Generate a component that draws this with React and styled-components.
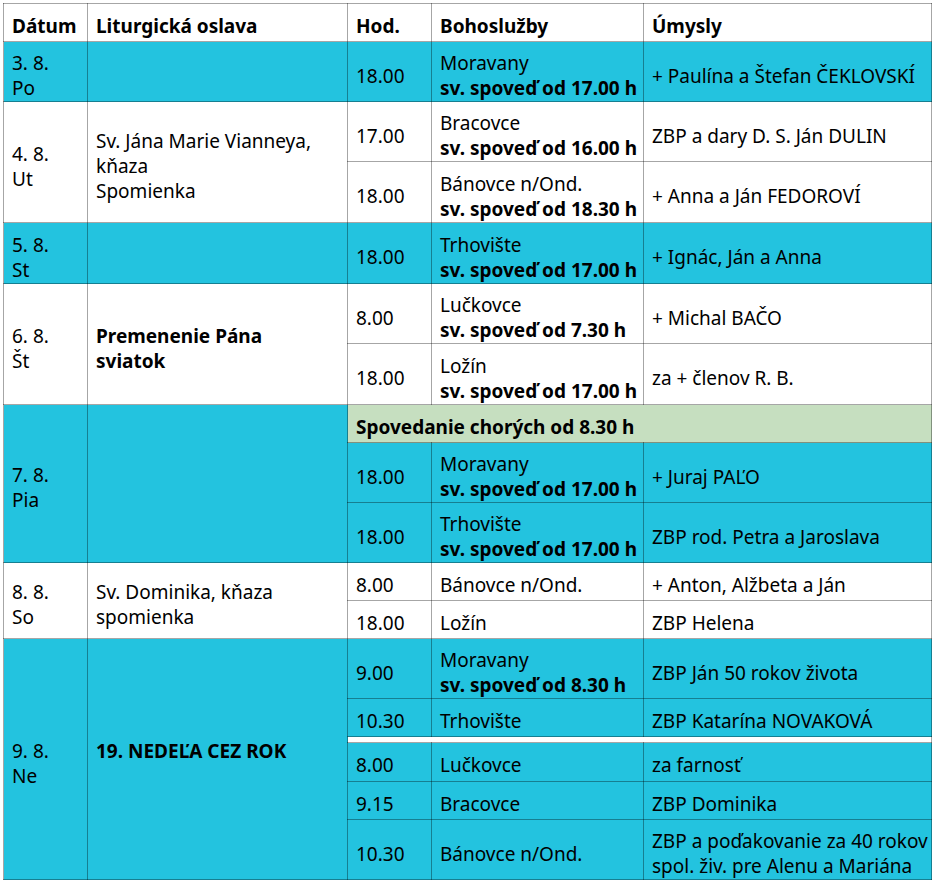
import React from 'react';
import styled, { createGlobalStyle, css } from 'styled-components';

const GlobalStyle = createGlobalStyle`
  html, body { margin: 0; padding: 0; background: #ffffff; }
  body { font-family: "Noto Sans", "Open Sans", sans-serif; color: #000; }
`;

const Page = styled.div`
  padding: 3px 0 0 3px;
`;

const Table = styled.table`
  border-collapse: collapse;
  table-layout: fixed;
  width: 929px;
  font-family: "Noto Sans", "Open Sans", sans-serif;
  font-size: 19px;
  line-height: 25px;
`;

const Row = styled.tr`
  height: ${p => p.$h}px;
  background: ${p => (p.$tone === 'cyan' ? '#23c3df' : '#ffffff')};
  ${p =>
    p.$h < 50 &&
    p.$h > 20 &&
    css`
      & > td:not([rowspan]),
      & > th {
        padding-top: 7px;
      }
    `}
`;

const Cell = styled.td`
  border: 1px solid rgba(0, 0, 0, 0.35);
  padding: 9px 4px 0 8px;
  vertical-align: middle;
  font-weight: ${p => (p.$bold ? 700 : 400)};
  white-space: ${p => (p.$nowrap ? 'nowrap' : 'normal')};
  background: ${p => (p.$bg ? p.$bg : 'transparent')};
`;

const Head = styled.th`
  border: 1px solid rgba(0, 0, 0, 0.35);
  padding: 7px 4px 0 8px;
  text-align: left;
  vertical-align: middle;
  font-weight: 700;
  background: #ffffff;
`;

const GapCell = styled.td`
  && {
    border: 1px solid rgba(0, 0, 0, 0.35);
    padding: 0;
    background: #ffffff;
    height: 4px;
    line-height: 0;
    font-size: 0;
  }
`;

const Strong = styled.b`
  font-weight: 700;
`;

function Service({ place, confession }) {
  return (
    <Cell $nowrap>
      {place}
      {confession && (
        <>
          <br />
          <Strong>{confession}</Strong>
        </>
      )}
    </Cell>
  );
}

function Lines({ items }) {
  return items.map((t, i) => (
    <React.Fragment key={i}>
      {i > 0 && <br />}
      {t}
    </React.Fragment>
  ));
}

export default function App() {
  return (
    <Page>
      <GlobalStyle />
      <Table>
        <colgroup>
          <col style={{ width: 84 }} />
          <col style={{ width: 260 }} />
          <col style={{ width: 84 }} />
          <col style={{ width: 212 }} />
          <col style={{ width: 288 }} />
        </colgroup>
        <thead>
          <Row $h={38}>
            <Head>Dátum</Head>
            <Head>Liturgická oslava</Head>
            <Head>Hod.</Head>
            <Head>Bohoslužby</Head>
            <Head>Úmysly</Head>
          </Row>
        </thead>
        <tbody>
          <Row $h={60} $tone="cyan">
            <Cell><Lines items={['3. 8.', 'Po']} /></Cell>
            <Cell />
            <Cell>18.00</Cell>
            <Service place="Moravany" confession="sv. spoveď od 17.00 h" />
            <Cell>+ Paulína a Štefan ČEKLOVSKÍ</Cell>
          </Row>

          <Row $h={60}>
            <Cell rowSpan={2}><Lines items={['4. 8.', 'Ut']} /></Cell>
            <Cell rowSpan={2}><Lines items={['Sv. Jána Marie Vianneya,', 'kňaza', 'Spomienka']} /></Cell>
            <Cell>17.00</Cell>
            <Service place="Bracovce" confession="sv. spoveď od 16.00 h" />
            <Cell>ZBP a dary D. S. Ján DULIN</Cell>
          </Row>
          <Row $h={61}>
            <Cell>18.00</Cell>
            <Service place="Bánovce n/Ond." confession="sv. spoveď od 18.30 h" />
            <Cell>+ Anna a Ján FEDOROVÍ</Cell>
          </Row>

          <Row $h={61} $tone="cyan">
            <Cell><Lines items={['5. 8.', 'St']} /></Cell>
            <Cell />
            <Cell>18.00</Cell>
            <Service place="Trhovište" confession="sv. spoveď od 17.00 h" />
            <Cell>+ Ignác, Ján a Anna</Cell>
          </Row>

          <Row $h={60}>
            <Cell rowSpan={2}><Lines items={['6. 8.', 'Št']} /></Cell>
            <Cell rowSpan={2} $bold><Lines items={['Premenenie Pána', 'sviatok']} /></Cell>
            <Cell>8.00</Cell>
            <Service place="Lučkovce" confession="sv. spoveď od 7.30 h" />
            <Cell>+ Michal BAČO</Cell>
          </Row>
          <Row $h={61}>
            <Cell>18.00</Cell>
            <Service place="Ložín" confession="sv. spoveď od 17.00 h" />
            <Cell>za + členov R. B.</Cell>
          </Row>

          <Row $h={38} $tone="cyan">
            <Cell rowSpan={3}><Lines items={['7. 8.', 'Pia']} /></Cell>
            <Cell rowSpan={3} />
            <Cell colSpan={3} $bold $nowrap $bg="#c6dfc0">Spovedanie chorých od 8.30 h</Cell>
          </Row>
          <Row $h={60} $tone="cyan">
            <Cell>18.00</Cell>
            <Service place="Moravany" confession="sv. spoveď od 17.00 h" />
            <Cell>+ Juraj PAĽO</Cell>
          </Row>
          <Row $h={60} $tone="cyan">
            <Cell>18.00</Cell>
            <Service place="Trhovište" confession="sv. spoveď od 17.00 h" />
            <Cell>ZBP rod. Petra a Jaroslava</Cell>
          </Row>

          <Row $h={38}>
            <Cell rowSpan={2}><Lines items={['8. 8.', 'So']} /></Cell>
            <Cell rowSpan={2}><Lines items={['Sv. Dominika, kňaza', 'spomienka']} /></Cell>
            <Cell>8.00</Cell>
            <Service place="Bánovce n/Ond." />
            <Cell>+ Anton, Alžbeta a Ján</Cell>
          </Row>
          <Row $h={38}>
            <Cell>18.00</Cell>
            <Service place="Ložín" />
            <Cell>ZBP Helena</Cell>
          </Row>

          <Row $h={60} $tone="cyan">
            <Cell rowSpan={6}><Lines items={['9. 8.', 'Ne']} /></Cell>
            <Cell rowSpan={6} $bold><Lines items={['19. NEDEĽA CEZ ROK', '\u00a0']} /></Cell>
            <Cell>9.00</Cell>
            <Service place="Moravany" confession="sv. spoveď od 8.30 h" />
            <Cell>ZBP Ján 50 rokov života</Cell>
          </Row>
          <Row $h={38} $tone="cyan">
            <Cell>10.30</Cell>
            <Service place="Trhovište" />
            <Cell>ZBP Katarína NOVAKOVÁ</Cell>
          </Row>
          <Row $h={6} $tone="cyan">
            <GapCell colSpan={3} />
          </Row>
          <Row $h={39} $tone="cyan">
            <Cell>8.00</Cell>
            <Service place="Lučkovce" />
            <Cell>za farnosť</Cell>
          </Row>
          <Row $h={38} $tone="cyan">
            <Cell>9.15</Cell>
            <Service place="Bracovce" />
            <Cell>ZBP Dominika</Cell>
          </Row>
          <Row $h={60} $tone="cyan">
            <Cell>10.30</Cell>
            <Service place="Bánovce n/Ond." />
            <Cell $nowrap><Lines items={['ZBP a poďakovanie za 40 rokov', 'spol. živ. pre Alenu a Mariána']} /></Cell>
          </Row>
        </tbody>
      </Table>
    </Page>
  );
}
